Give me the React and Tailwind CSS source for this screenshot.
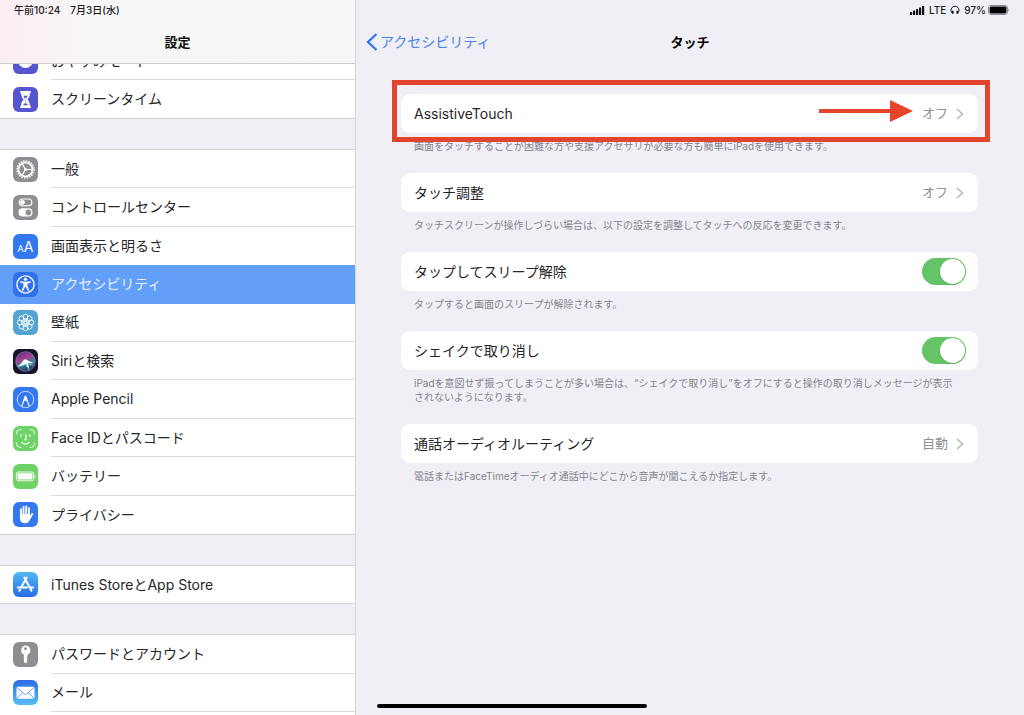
import { useId, useState } from 'react';

const iconFrame = 'h-[25px] w-[25px] shrink-0 rounded-[6px]';

function MoonIcon() {
  return (
    <svg viewBox="0 0 25 25" className={`${iconFrame} bg-[#5654cf]`} aria-hidden="true">
      <circle cx="12.500" cy="11.500" r="7.500" fill="#fff" />
      <circle cx="16" cy="7.500" r="6" fill="#5654cf" />
    </svg>
  );
}

function HourglassIcon() {
  return (
    <svg viewBox="0 0 25 25" className={`${iconFrame} bg-[#5654cf]`} aria-hidden="true">
      <path
        d="M7.300 4h10.400v2.200h-.8c0 3-1 4.400-2.500 6.300 1.500 1.900 2.500 3.300 2.500 6.300h.8V21H7.300v-2.200h.8c0-3 1-4.400 2.500-6.300-1.500-1.900-2.500-3.300-2.500-6.300h-.8z"
        fill="#fff"
      />
      <path d="M10.300 8.700h4.400l-1.700 3v4.300l2.200 2.300H9.800l2.200-2.300v-4.300z" fill="#5654cf" />
      <path d="M12.500 10.500v6" stroke="#fff" strokeWidth="0.6" />
    </svg>
  );
}

function GearIcon() {
  return (
    <svg viewBox="0 0 25 25" className={`${iconFrame} bg-[#8e8e93]`} aria-hidden="true">
      <g fill="none" stroke="#fff">
        <circle cx="12.500" cy="12.500" r="8.500" strokeWidth="1.500" strokeDasharray="1.500 1.170" />
        <circle cx="12.500" cy="12.500" r="7" strokeWidth="1.700" />
        <path d="M12.500 12.500h6.500M12.500 12.500L9.200 6.900M12.500 12.500l-3.300 5.600" strokeWidth="1.200" />
      </g>
      <circle cx="12.500" cy="12.500" r="1.500" fill="#fff" />
    </svg>
  );
}

function TogglesIcon() {
  return (
    <svg viewBox="0 0 25 25" className={`${iconFrame} bg-[#8e8e93]`} aria-hidden="true">
      <rect x="6.200" y="4" width="12.600" height="6.600" rx="3.300" fill="none" stroke="#fff" strokeWidth="1.200" />
      <circle cx="9.500" cy="7.300" r="2.400" fill="#fff" />
      <rect x="5.500" y="13.300" width="14" height="8.200" rx="4.100" fill="#fff" />
      <circle cx="15.300" cy="17.400" r="2.800" fill="#8e8e93" />
    </svg>
  );
}

function TextSizeIcon() {
  return (
    <span
      className={`${iconFrame} flex items-baseline justify-center bg-[#3478f0] leading-[25px] text-white`}
      aria-hidden="true"
    >
      <span className="text-[9px]">A</span>
      <span className="text-[14px]">A</span>
    </span>
  );
}

function AccessibilityIcon() {
  return (
    <svg viewBox="0 0 25 25" className={`${iconFrame} bg-[#3072ee]`} aria-hidden="true">
      <circle cx="12.500" cy="12.500" r="8.600" fill="none" stroke="#fff" strokeWidth="1.400" />
      <circle cx="12.500" cy="7.300" r="1.600" fill="#fff" />
      <path
        d="M7.200 9.300l4 .5h2.600l4-.5.2 1.200-3.500.9v2.500l1.800 4.900-1.200.5-2.600-5-2.600 5-1.200-.5 1.800-4.900v-2.500l-3.500-.9z"
        fill="#fff"
      />
    </svg>
  );
}

function WallpaperIcon() {
  return (
    <svg viewBox="0 0 25 25" className={`${iconFrame} bg-[#54a5cf]`} aria-hidden="true">
      <g fill="none" stroke="#fff" strokeWidth="0.9">
        <circle cx="12.500" cy="12.500" r="1.500" />
        {[0, 45, 90, 135, 180, 225, 270, 315].map((angle) => (
          <g key={angle} transform={`rotate(${angle} 12.500 12.500)`}>
            <circle cx="12.500" cy="6.800" r="2.500" />
            <path d="M12.500 11c-1.400-.8-1.400-1.500 0-2.300 1.400.8 1.400 1.500 0 2.300z" strokeWidth="0.700" />
          </g>
        ))}
      </g>
    </svg>
  );
}

function SiriIcon() {
  return (
    <svg viewBox="0 0 25 25" className={`${iconFrame} bg-[#17152c]`} aria-hidden="true">
      <defs>
        <linearGradient id="siri-orb" x1="0.300" y1="0" x2="0.700" y2="1">
          <stop offset="0" stopColor="#6a2c86" />
          <stop offset="0.350" stopColor="#a8418f" />
          <stop offset="0.600" stopColor="#3a7c9c" />
          <stop offset="1" stopColor="#262b50" />
        </linearGradient>
      </defs>
      <circle cx="12.500" cy="12.500" r="9.800" fill="url(#siri-orb)" stroke="#8f87a8" strokeWidth="0.700" />
      <path d="M3.500 17.500C8 16.500 9 11.500 12.500 10.500c3 1.500 5 4 9 6.500-3-.4-5-.8-6.500-.6 1 2 1.600 3.600 1.600 5.600-2-1.600-3-3.600-3.600-5.600-3 .2-5 2.200-9.500 1.100z" fill="#4ec3c4" opacity="0.800" />
      <path d="M4 17.200c4-.7 5.500-5.700 8-6.900 3 1 4.500 2.600 9 3.700-2.800.4-4.900.2-6.600-.2 1 2 1.500 3.700 1.700 5.700-1.500-1.500-2.500-3-3.400-4.600C10 15 8 17.500 4 17.200z" fill="#fff" />
    </svg>
  );
}

function PencilIcon() {
  return (
    <svg viewBox="0 0 25 25" className={`${iconFrame} bg-[#3478f0]`} aria-hidden="true">
      <circle cx="12.500" cy="12.500" r="8.200" fill="none" stroke="#d6e4ff" strokeWidth="0.9" />
      <path d="M8.800 19.300l3.200-9.500h1l3.200 9.500" fill="none" stroke="#fff" strokeWidth="1.100" />
      <path d="M10.700 13.200l1.800-5.500 1.800 5.500-1.800 1z" fill="#fff" />
    </svg>
  );
}

function FaceIdIcon() {
  return (
    <svg viewBox="0 0 25 25" className={`${iconFrame} bg-[#6fd266]`} aria-hidden="true">
      <g fill="none" stroke="#fff" strokeWidth="0.900" strokeLinecap="round">
        <path d="M3.800 8V6.300A2.500 2.500 0 0 1 6.300 3.800H8M17 3.800h1.700a2.500 2.500 0 0 1 2.500 2.500V8M21.200 17v1.700a2.500 2.500 0 0 1-2.500 2.500H17M8 21.200H6.300a2.500 2.500 0 0 1-2.500-2.500V17" />
        <path d="M8.200 8.800v1.600M16.800 8.800v1.600M12.900 8.800v4.900h-1.200M8.800 16.400c2.200 2.100 5.200 2.100 7.400 0" strokeWidth="1.200" />
      </g>
    </svg>
  );
}

function BatteryIcon() {
  return (
    <svg viewBox="0 0 25 25" className={`${iconFrame} bg-[#6fd266]`} aria-hidden="true">
      <rect x="3.300" y="8" width="17.400" height="8.800" rx="2" fill="none" stroke="#fff" strokeWidth="0.9" />
      <rect x="4.600" y="9.300" width="14.800" height="6.200" rx="1" fill="#fff" />
      <path d="M21.700 11v3c1.200-.4 1.200-2.600 0-3z" fill="#fff" />
    </svg>
  );
}

function HandIcon() {
  return (
    <svg viewBox="0 0 25 25" className={`${iconFrame} bg-[#3478f0]`} aria-hidden="true">
      <g fill="none" stroke="#fff" strokeWidth="1.900" strokeLinecap="round" strokeLinejoin="round">
        <path d="M7.900 7.300v7M10.500 4.900v9M13.200 4.400v9M15.900 6.100v8M19.200 12.100l-2.900 4.600" />
      </g>
      <path d="M6.950 12h9.900v2.500l1.900-.8-2 4.300c-1 2.300-2.300 3.300-4.600 3.300-3.400 0-5.200-2-5.200-5z" fill="#fff" />
    </svg>
  );
}

function AppStoreIcon() {
  return (
    <svg
      viewBox="0 0 25 25"
      className={`${iconFrame} bg-linear-to-b from-[#55b8f3] to-[#2a6be6]`}
      aria-hidden="true"
    >
      <g fill="none" stroke="#fff" strokeWidth="2" strokeLinecap="round">
        <path d="M13.700 5.600L8.500 14.700M11.300 5.600l7.200 13.200M4.800 15.400h9.200M17 15.400h3.200M7 17.800l-.6 1" />
      </g>
    </svg>
  );
}

function KeyIcon() {
  return (
    <svg viewBox="0 0 25 25" className={`${iconFrame} bg-[#8e8e93]`} aria-hidden="true">
      <path
        d="M12.500 3.600a4.800 4.800 0 0 1 2.100 9.100v1.800l-1.200 1.100 1.200 1.200-1.200 1.300 1.200 1.100-2 2.200-1.700-1.600v-7.100a4.800 4.800 0 0 1 1.600-9.100z"
        fill="#fff"
      />
      <circle cx="12.500" cy="6.700" r="1.400" fill="#8e8e93" />
    </svg>
  );
}

function MailIcon() {
  return (
    <svg
      viewBox="0 0 25 25"
      className={`${iconFrame} bg-linear-to-b from-[#2f6be4] to-[#58bdf5]`}
      aria-hidden="true"
    >
      <rect x="3.500" y="6.700" width="18" height="12" rx="1.400" fill="#fff" />
      <path d="M4 7.400l7.300 6.600c.8.600 1.600.6 2.400 0L21 7.400M4 18.200l5.700-5.400M21 18.200l-5.700-5.400" fill="none" stroke="#4b8fe8" strokeWidth="0.9" />
    </svg>
  );
}

const mainItems = [
  { label: '一般', icon: GearIcon },
  { label: 'コントロールセンター', icon: TogglesIcon },
  { label: '画面表示と明るさ', icon: TextSizeIcon, divider: false },
  { label: 'アクセシビリティ', icon: AccessibilityIcon, active: true, divider: false },
  { label: '壁紙', icon: WallpaperIcon },
  { label: 'Siriと検索', icon: SiriIcon },
  { label: 'Apple Pencil', icon: PencilIcon },
  { label: 'Face IDとパスコード', icon: FaceIdIcon },
  { label: 'バッテリー', icon: BatteryIcon },
  { label: 'プライバシー', icon: HandIcon, divider: false },
];

function SidebarItem({ label, icon: Icon, active = false, divider = true }) {
  return (
    <a
      href="#"
      aria-current={active ? 'page' : undefined}
      className={`flex min-h-[37px] flex-1 items-stretch gap-[13px] pl-[13px] text-sm ${
        active ? 'bg-[#629ff8] text-[#e6f0ff]' : 'text-[#262628]'
      }`}
    >
      <span className="flex items-center">
        <Icon />
      </span>
      <span
        className={`flex flex-1 items-center whitespace-nowrap ${divider ? 'border-b border-[#dcdce0]' : ''}`}
      >
        {label}
      </span>
    </a>
  );
}

function Sidebar() {
  return (
    <aside className="flex w-[356px] shrink-0 flex-col overflow-hidden border-r border-[#d8d8dc]">
      <header className="flex h-16 shrink-0 flex-col border-b border-[#cdcdd0] bg-linear-to-r from-[#fbeef2] via-[#f7f6f7] via-25% to-[#f7f7f7] pt-1">
        <p className="flex gap-2.5 pl-3.5 text-[10px] leading-3 font-medium text-[#1c1c1e]">
          <span>午前10:24</span>
          <span>7月3日(水)</span>
        </p>
        <h2 className="mt-4 text-center text-[13px] leading-5 font-bold text-[#111]">設定</h2>
      </header>

      <nav className="flex min-h-0 flex-1 flex-col gap-[30px]" aria-label="設定">
        <div className="flex h-[55px] shrink-0 flex-col justify-end overflow-hidden border-b border-[#d4d4d8] bg-white">
          <div className="flex min-h-[76px] shrink-0 flex-col">
            <SidebarItem label="おやすみモード" icon={MoonIcon} />
            <SidebarItem label="スクリーンタイム" icon={HourglassIcon} divider={false} />
          </div>
        </div>

        <div className="flex min-h-[386px] shrink-0 flex-col border-y border-[#d4d4d8] bg-white">
          {mainItems.map((item) => (
            <SidebarItem key={item.label} {...item} />
          ))}
        </div>

        <div className="flex min-h-[39px] shrink-0 flex-col border-y border-[#d4d4d8] bg-white">
          <SidebarItem label="iTunes StoreとApp Store" icon={AppStoreIcon} divider={false} />
        </div>

        <div className="flex flex-1 flex-col border-t border-[#d4d4d8] bg-white">
          <div className="flex min-h-[77px] flex-col">
            <SidebarItem label="パスワードとアカウント" icon={KeyIcon} />
            <SidebarItem label="メール" icon={MailIcon} />
          </div>
        </div>
      </nav>
    </aside>
  );
}

function StatusIcons() {
  return (
    <div className="flex h-3 items-center justify-end gap-1 pr-3.5 text-[10px] font-medium text-[#1c1c1e]">
      <svg viewBox="0 0 15 9" className="h-[9px] w-[15px]" fill="#111" aria-hidden="true">
        <rect x="0" y="6" width="2.200" height="3" rx="0.500" />
        <rect x="3" y="4.500" width="2.200" height="4.500" rx="0.500" />
        <rect x="6" y="3" width="2.200" height="6" rx="0.500" />
        <rect x="9" y="1.500" width="2.200" height="7.500" rx="0.500" />
        <rect x="12" y="0" width="2.200" height="9" rx="0.500" />
      </svg>
      <span>LTE</span>
      <svg viewBox="0 0 10 10" className="h-2.5 w-2.5" fill="none" stroke="#111" strokeWidth="1" aria-hidden="true">
        <path d="M2.300 8.200A4 4 0 1 1 7.700 8.200" />
        <path d="M2.800 5.800v3M7.200 5.800v3" strokeWidth="1.600" />
      </svg>
      <span className="flex items-center gap-0.5">
        97%
        <svg viewBox="0 0 22 10" className="h-2.5 w-[22px]" aria-hidden="true">
          <rect x="0.500" y="0.500" width="19" height="9" rx="2.400" fill="none" stroke="#8b8b8f" />
          <rect x="1.600" y="1.600" width="16.800" height="6.800" rx="1.400" fill="#000" />
          <path d="M20.500 3.500v3c1-.4 1-2.600 0-3z" fill="#8b8b8f" />
        </svg>
      </span>
    </div>
  );
}

function Chevron() {
  return (
    <svg viewBox="0 0 8 12" className="h-3 w-2" fill="none" stroke="#b9b9be" strokeWidth="1.600" aria-hidden="true">
      <path d="M1 1l5.500 5L1 11" />
    </svg>
  );
}

function Section({ caption, children }) {
  return (
    <section className="relative">
      {children}
      <p className="mt-1.5 pl-[13px] text-[10px] leading-[14px] whitespace-pre-line text-[#85858b]">{caption}</p>
    </section>
  );
}

function LinkRow({ label, value }) {
  return (
    <button
      type="button"
      className="flex min-h-[39px] w-full items-center rounded-[9px] bg-white pr-3.5 pl-[13px] text-left text-sm text-[#262628]"
    >
      <span className="flex-1">{label}</span>
      <span className="mr-2 text-[13px] text-[#8e8e93]">{value}</span>
      <Chevron />
    </button>
  );
}

function SwitchRow({ label }) {
  const id = useId();
  const [checked, setChecked] = useState(true);

  return (
    <div className="flex min-h-[39px] items-center rounded-[9px] bg-white pr-3 pl-[13px] text-sm text-[#262628]">
      <label htmlFor={id} className="flex-1">
        {label}
      </label>
      <input
        id={id}
        type="checkbox"
        role="switch"
        checked={checked}
        onChange={(event) => setChecked(event.target.checked)}
        className="flex h-[27px] w-11 appearance-none items-center rounded-full bg-[#d9d9dd] px-px before:h-[25px] before:w-[25px] before:rounded-full before:bg-white before:shadow-sm checked:justify-end checked:bg-[#65c466]"
      />
    </div>
  );
}

// Red frame and arrow laid over the first row.
function Highlight() {
  return (
    <div className="pointer-events-none absolute -top-[14px] -right-3 -left-[9px] h-[62px] border-[5px] border-[#e2442d]">
      <svg
        viewBox="0 0 94 24"
        className="absolute top-[14px] right-[72px] h-6 w-[94px]"
        fill="#e8432b"
        aria-hidden="true"
      >
        <rect x="0" y="10" width="72" height="4" />
        <path d="M71 1v22l23-11z" />
      </svg>
    </div>
  );
}

function DetailPane() {
  return (
    <main className="relative flex min-w-0 flex-1 flex-col">
      <header className="flex h-16 shrink-0 flex-col pt-1">
        <StatusIcons />
        <div className="mt-4 grid grid-cols-[1fr_auto_1fr] items-center px-2.5 leading-5">
          <a href="#" className="flex items-center gap-0.5 text-sm text-[#4a83ec]">
            <svg viewBox="0 0 12 18" className="h-[18px] w-3" fill="none" stroke="#3478f0" strokeWidth="2.400" aria-hidden="true">
              <path d="M10.500 1L2 9l8.500 8" />
            </svg>
            アクセシビリティ
          </a>
          <h1 className="text-[13px] font-bold text-black">タッチ</h1>
        </div>
      </header>

      <div className="flex flex-col gap-5 pt-[30px] pr-[46px] pl-[45px]">
        <Section caption="画面をタッチすることが困難な方や支援アクセサリが必要な方も簡単にiPadを使用できます。">
          <LinkRow label="AssistiveTouch" value="オフ" />
          <Highlight />
        </Section>
        <Section caption="タッチスクリーンが操作しづらい場合は、以下の設定を調整してタッチへの反応を変更できます。">
          <LinkRow label="タッチ調整" value="オフ" />
        </Section>
        <Section caption="タップすると画面のスリープが解除されます。">
          <SwitchRow label="タップしてスリープ解除" />
        </Section>
        <Section
          caption={
            'iPadを意図せず振ってしまうことが多い場合は、“シェイクで取り消し”をオフにすると操作の取り消しメッセージが表示\nされないようになります。'
          }
        >
          <SwitchRow label="シェイクで取り消し" />
        </Section>
        <Section caption="電話またはFaceTimeオーディオ通話中にどこから音声が聞こえるか指定します。">
          <LinkRow label="通話オーディオルーティング" value="自動" />
        </Section>
      </div>
    </main>
  );
}

export default function App() {
  return (
    <div
      lang="ja"
      className="relative flex h-screen overflow-hidden bg-[#f0eff5] font-['Inter','Noto_Sans_CJK_JP',sans-serif]"
    >
      <Sidebar />
      <DetailPane />
      <div className="absolute bottom-[7px] left-1/2 h-1 w-[270px] -translate-x-1/2 rounded-full bg-black" />
    </div>
  );
}
